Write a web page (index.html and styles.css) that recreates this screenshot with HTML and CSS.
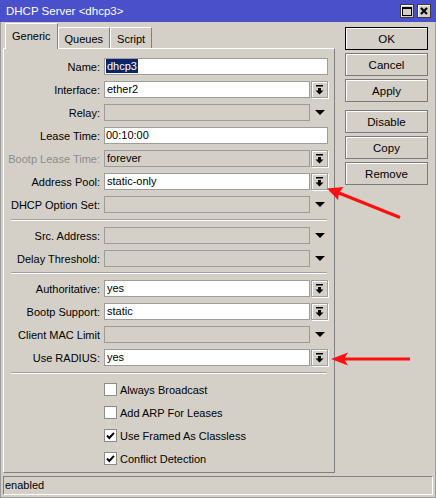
FILE: index.html
```html
<!DOCTYPE html>
<html>
<head>
<meta charset="utf-8">
<link rel="stylesheet" href="styles.css">
</head>
<body>
<div class="window">
  <div class="titlebar">
    <span class="title">DHCP Server &lt;dhcp3&gt;</span>
    <div class="wbtns">
      <div class="wbtn"><div class="maxglyph"></div></div>
      <div class="wbtn"><svg width="10" height="10" viewBox="0 0 10 10"><path d="M2 2L8 8M8 2L2 8" stroke="#000" stroke-width="2.2"/></svg></div>
    </div>
  </div>
  <div class="main">
    <div class="left">
      <div class="tabs">
        <div class="tab active">Generic</div>
        <div class="tab">Queues</div>
        <div class="tab">Script</div>
      </div>
      <div class="panel">
        <div class="row"><div class="lbl">Name:</div><div class="inp wide"><span class="sel">dhcp3</span></div></div>
        <div class="row"><div class="lbl">Interface:</div><div class="inp">ether2</div><div class="ddbtn"><svg width="9" height="10" viewBox="0 0 9 10"><path d="M1 0h7v1.5H1z M3 3h3v2.5H3z M0.5 5.5h8L4.5 9.5z" fill="#000"/></svg></div></div>
        <div class="row"><div class="lbl">Relay:</div><div class="inp dis"></div><div class="ddtri"><svg width="10" height="5" viewBox="0 0 10 5"><path d="M0 0h10L5 5z" fill="#000"/></svg></div></div>
        <div class="row"><div class="lbl">Lease Time:</div><div class="inp wide">00:10:00</div></div>
        <div class="row"><div class="lbl grey">Bootp Lease Time:</div><div class="inp dis">forever</div><div class="ddbtn"><svg width="9" height="10" viewBox="0 0 9 10"><path d="M1 0h7v1.5H1z M3 3h3v2.5H3z M0.5 5.5h8L4.5 9.5z" fill="#000"/></svg></div></div>
        <div class="row"><div class="lbl">Address Pool:</div><div class="inp">static-only</div><div class="ddbtn"><svg width="9" height="10" viewBox="0 0 9 10"><path d="M1 0h7v1.5H1z M3 3h3v2.5H3z M0.5 5.5h8L4.5 9.5z" fill="#000"/></svg></div></div>
        <div class="row"><div class="lbl">DHCP Option Set:</div><div class="inp dis"></div><div class="ddtri"><svg width="10" height="5" viewBox="0 0 10 5"><path d="M0 0h10L5 5z" fill="#000"/></svg></div></div>
        <div class="sep"></div>
        <div class="row"><div class="lbl">Src. Address:</div><div class="inp dis"></div><div class="ddtri"><svg width="10" height="5" viewBox="0 0 10 5"><path d="M0 0h10L5 5z" fill="#000"/></svg></div></div>
        <div class="row"><div class="lbl">Delay Threshold:</div><div class="inp dis"></div><div class="ddtri"><svg width="10" height="5" viewBox="0 0 10 5"><path d="M0 0h10L5 5z" fill="#000"/></svg></div></div>
        <div class="sep tight"></div>
        <div class="row"><div class="lbl">Authoritative:</div><div class="inp">yes</div><div class="ddbtn"><svg width="9" height="10" viewBox="0 0 9 10"><path d="M1 0h7v1.5H1z M3 3h3v2.5H3z M0.5 5.5h8L4.5 9.5z" fill="#000"/></svg></div></div>
        <div class="row"><div class="lbl">Bootp Support:</div><div class="inp">static</div><div class="ddbtn"><svg width="9" height="10" viewBox="0 0 9 10"><path d="M1 0h7v1.5H1z M3 3h3v2.5H3z M0.5 5.5h8L4.5 9.5z" fill="#000"/></svg></div></div>
        <div class="row"><div class="lbl">Client MAC Limit</div><div class="inp dis"></div><div class="ddtri"><svg width="10" height="5" viewBox="0 0 10 5"><path d="M0 0h10L5 5z" fill="#000"/></svg></div></div>
        <div class="row"><div class="lbl">Use RADIUS:</div><div class="inp">yes</div><div class="ddbtn"><svg width="9" height="10" viewBox="0 0 9 10"><path d="M1 0h7v1.5H1z M3 3h3v2.5H3z M0.5 5.5h8L4.5 9.5z" fill="#000"/></svg></div></div>
        <div class="sep"></div>
        <div class="row chk first"><div class="box"></div><span>Always Broadcast</span></div>
        <div class="row chk"><div class="box"></div><span>Add ARP For Leases</span></div>
        <div class="row chk"><div class="box"><svg width="11" height="11" viewBox="0 0 11 11"><path d="M2 5.5L4.3 8 9 2.8" stroke="#000" stroke-width="1.9" fill="none"/></svg></div><span>Use Framed As Classless</span></div>
        <div class="row chk"><div class="box"><svg width="11" height="11" viewBox="0 0 11 11"><path d="M2 5.5L4.3 8 9 2.8" stroke="#000" stroke-width="1.9" fill="none"/></svg></div><span>Conflict Detection</span></div>
      </div>
    </div>
    <div class="right">
      <div class="btn def">OK</div>
      <div class="btn">Cancel</div>
      <div class="btn">Apply</div>
      <div class="btn gap">Disable</div>
      <div class="btn">Copy</div>
      <div class="btn">Remove</div>
    </div>
  </div>
  <div class="status">enabled</div>
</div>
<svg class="arrows" width="436" height="498" viewBox="0 0 436 498">
  <line x1="400" y1="217.5" x2="339" y2="193" stroke="#ff1010" stroke-width="3.2"/>
  <polygon points="327,188.5 343.5,187 339,193 338,200" fill="#ff1010"/>
  <line x1="410" y1="359" x2="343" y2="359" stroke="#ff1010" stroke-width="3.2"/>
  <polygon points="331,359 348,352.5 344,359 348,365.5" fill="#ff1010"/>
</svg>
</body>
</html>
```
FILE: styles.css
```css
* { box-sizing: border-box; margin: 0; padding: 0; }
body {
  width: 436px;
  height: 498px;
  background: #d4d0c8;
  font-family: "Liberation Sans", Arial, sans-serif;
  font-size: 11px;
  color: #000;
  overflow: hidden;
  position: relative;
}
.window {
  height: 498px;
  display: flex;
  flex-direction: column;
  box-shadow: inset 1px 0 #9a9a9a, inset -1px 0 #9a9a9a, inset 0 -1px #9a9a9a;
}
.titlebar {
  height: 22px;
  background: #4a4fca;
  display: flex;
  align-items: center;
  justify-content: space-between;
  padding: 0 5px 0 6px;
}
.title { color: #fff; font-size: 11.5px; }
.wbtns { display: flex; gap: 3px; }
.wbtn {
  width: 14px;
  height: 14px;
  background: #d4d0c8;
  border: 1px solid #3a3a3a;
  box-shadow: inset 1px 1px #fff;
  display: flex;
  align-items: center;
  justify-content: center;
}
.maxglyph {
  width: 10px;
  height: 9px;
  border: 1px solid #000;
  border-top-width: 2px;
}
.main { display: flex; padding-top: 1px; }
.left { margin-left: 3px; width: 332px; }
.tabs {
  height: 25px;
  display: flex;
  align-items: flex-end;
  padding-left: 2px;
}
.tab {
  height: 21px;
  padding: 3px 6px 0 6px;
  line-height: 16px;
  border: 1px solid #fff;
  border-right-color: #808080;
  border-bottom: none;
  background: #d4d0c8;
}
.tab.active {
  height: 26px;
  margin-bottom: -1px;
  padding-top: 4px;
  position: relative;
  z-index: 1;
}
.panel {
  border: 1px solid #fff;
  border-right-color: #808080;
  border-bottom-color: #808080;
  padding: 9px 0 5px 0;
  display: flex;
  flex-direction: column;
  gap: 6px;
}
.row { display: flex; align-items: center; height: 17px; }
.lbl {
  width: 96px;
  margin-right: 4px;
  text-align: right;
  white-space: nowrap;
}
.lbl.grey { color: #8c8c8c; }
.inp {
  width: 206px;
  height: 17px;
  background: #fff;
  border: 1px solid #9c9c9c;
  padding-left: 2px;
  line-height: 15px;
  white-space: nowrap;
}
.inp.wide { width: 224px; padding-left: 1px; }
.inp.dis { background: #d4d0c8; }
.sel {
  display: inline-block;
  background: #0a246a;
  color: #fff;
  padding: 0 1px;
  line-height: 14px;
  margin-top: 0;
}
.ddbtn {
  width: 17px;
  height: 17px;
  margin-left: 1px;
  border: 1px solid #a0a0a0;
  box-shadow: inset 1px 1px #fff, 1px 1px #fff;
  display: flex;
  align-items: center;
  justify-content: center;
}
.ddtri {
  width: 17px;
  height: 17px;
  margin-left: 1px;
  display: flex;
  align-items: center;
  justify-content: center;
}
.sep {
  height: 2px;
  margin-left: 7px;
  width: 316px;
  border-top: 1px solid #a0a0a0;
  border-bottom: 1px solid #fff;
}
.sep.tight { margin-top: -1px; }
.chk { padding-left: 100px; gap: 3px; }
.chk.first { margin-top: 1px; }
.box {
  width: 13px;
  height: 13px;
  background: #fff;
  border: 1px solid #8c8c8c;
  display: flex;
  align-items: center;
  justify-content: center;
}
.right {
  margin-left: 10px;
  width: 83px;
  padding-top: 4px;
  display: flex;
  flex-direction: column;
  gap: 3px;
}
.btn {
  height: 23px;
  border: 1px solid #7a7a7a;
  box-shadow: inset 1px 1px #fff;
  display: flex;
  align-items: center;
  justify-content: center;
  font-size: 11.5px;
}
.btn.def { border-color: #000; }
.btn.gap { margin-top: 5px; }
.status {
  margin: 3px 3px 0 3px;
  height: 19px;
  border: 1px solid #808080;
  border-right-color: #fff;
  border-bottom-color: #fff;
  padding-left: 1px;
  line-height: 17px;
}
.arrows { position: absolute; left: 0; top: 0; pointer-events: none; }
```
